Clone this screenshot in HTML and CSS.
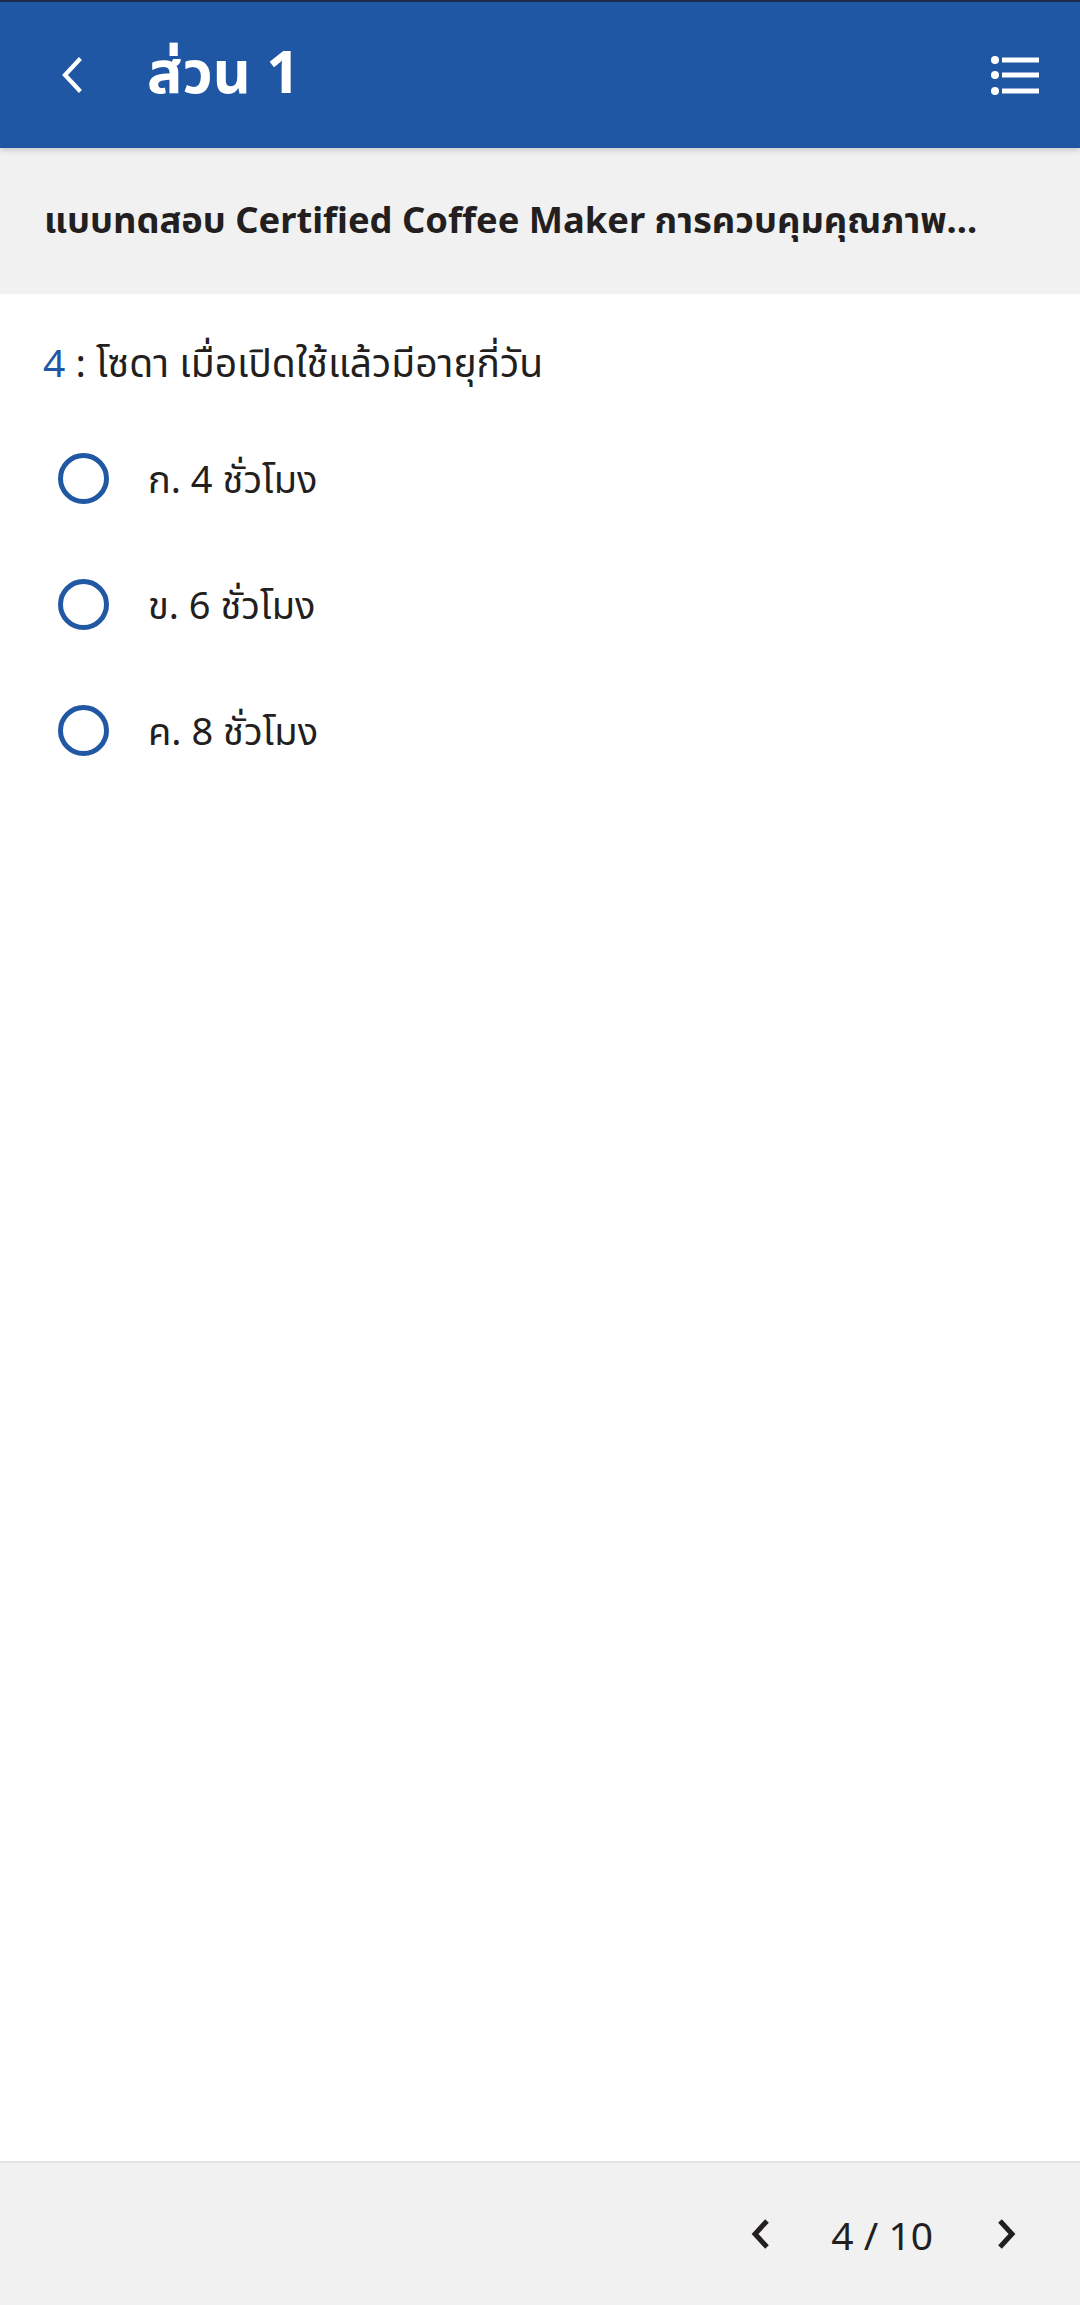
FILE: index.html
```html
<!DOCTYPE html>
<html lang="th">
<head>
<meta charset="utf-8">
<title>ส่วน 1</title>
<link rel="stylesheet" href="styles.css">
</head>
<body>
<div class="page">
  <header class="appbar">
    <button class="icon-btn back" aria-label="ย้อนกลับ">
      <svg width="30" height="40" viewBox="0 0 30 40"><polyline points="21,5 7,20 21,35" fill="none" stroke="#fff" stroke-width="4.2" stroke-linecap="square" stroke-linejoin="miter"/></svg>
    </button>
    <h1 class="title">ส่วน 1</h1>
    <button class="icon-btn menu" aria-label="รายการ">
      <svg width="50" height="40" viewBox="0 0 50 40"><circle cx="5" cy="5" r="4" fill="#fff"/><circle cx="5" cy="20" r="4" fill="#fff"/><circle cx="5" cy="36" r="4" fill="#fff"/><rect x="12" y="2.5" width="37" height="5" fill="#fff"/><rect x="12" y="17.5" width="37" height="5" fill="#fff"/><rect x="12" y="33.5" width="37" height="5" fill="#fff"/></svg>
    </button>
  </header>
  <div class="subhead">
    <div class="subhead-text">แบบทดสอบ Certified Coffee Maker การควบคุมคุณภาพ...</div>
  </div>
  <main class="content">
    <p class="question"><span class="qno">4</span> : โซดา เมื่อเปิดใช้แล้วมีอายุกี่วัน</p>
    <ul class="options">
      <li class="option"><span class="radio"></span><span class="opt-text">ก. 4 ชั่วโมง</span></li>
      <li class="option"><span class="radio"></span><span class="opt-text">ข. 6 ชั่วโมง</span></li>
      <li class="option"><span class="radio"></span><span class="opt-text">ค. 8 ชั่วโมง</span></li>
    </ul>
  </main>
  <footer class="pager">
    <button class="icon-btn nav" aria-label="ก่อนหน้า">
      <svg width="24" height="34" viewBox="0 0 24 34"><polyline points="18,4 6,17 18,30" fill="none" stroke="#231f20" stroke-width="5" stroke-linecap="butt" stroke-linejoin="miter"/></svg>
    </button>
    <span class="count">4 / 10</span>
    <button class="icon-btn nav" aria-label="ถัดไป">
      <svg width="24" height="34" viewBox="0 0 24 34"><polyline points="6,4 18,17 6,30" fill="none" stroke="#231f20" stroke-width="5" stroke-linecap="butt" stroke-linejoin="miter"/></svg>
    </button>
  </footer>
</div>
</body>
</html>
```

FILE: styles.css
```css
* { box-sizing: border-box; }
html, body { margin: 0; padding: 0; }
body {
  font-family: "Noto Sans", "Noto Sans Thai", "Open Sans", sans-serif;
  color: #231f20;
  background: #fff;
}
.page {
  display: flex;
  flex-direction: column;
  min-height: 2305px;
}
.icon-btn {
  border: 0;
  background: none;
  padding: 0;
  margin: 0;
  display: flex;
  align-items: center;
  justify-content: center;
  cursor: pointer;
}
.appbar {
  position: relative;
  z-index: 2;
  height: 148px;
  background: #1f57a5;
  border-top: 2px solid #1c2c4c;
  display: flex;
  align-items: center;
  padding: 0 40px 0 58px;
  box-shadow: 0 2px 6px rgba(0,0,0,0.18);
}
.back { width: 30px; height: 40px; }
.title {
  margin: 0 0 0 59px;
  padding-bottom: 9px;
  font-size: 59px;
  font-weight: 700;
  color: #fff;
  line-height: 1;
  flex: 1;
}
.menu { width: 50px; height: 40px; }
.subhead {
  height: 146px;
  background: #f1f1f1;
  display: flex;
  align-items: center;
  padding: 0 44px;
}
.subhead-text {
  font-size: 36.3px;
  font-weight: 700;
  white-space: nowrap;
  overflow: hidden;
}
.content {
  flex: 1;
  padding: 46px 43px 0;
}
.question {
  margin: 0;
  font-size: 39px;
  line-height: 44px;
}
.qno {
  color: #1f57a5;
}
.options {
  list-style: none;
  margin: 31px 0 0;
  padding: 0;
}
.option {
  height: 126px;
  display: flex;
  align-items: center;
  padding-left: 15px;
}
.radio {
  width: 51px;
  height: 51px;
  border: 5px solid #2158a4;
  border-radius: 50%;
  flex: none;
}
.opt-text {
  margin-left: 39px;
  font-size: 38px;
  line-height: 44px;
}
.pager {
  height: 144px;
  background: #f1f1f1;
  border-top: 2px solid #e2e2e2;
  display: flex;
  align-items: center;
  justify-content: flex-end;
  padding: 0 62px 0 0;
}
.nav { width: 24px; height: 34px; }
.count {
  font-size: 39px;
  margin: 0 61px 0 58px;
}
```
